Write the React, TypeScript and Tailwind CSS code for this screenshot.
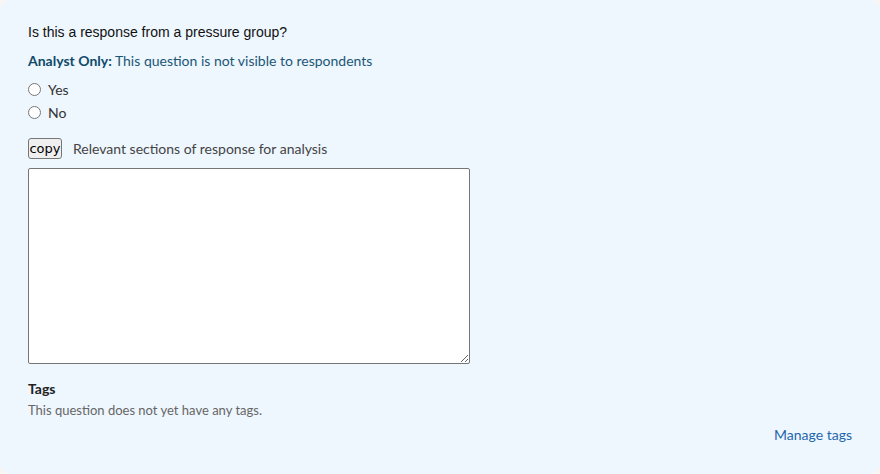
import React from "react";

export default function App() {
  return (
    <div className="w-[880px] h-[474px] bg-[#f7f6f0]">
      <div className="w-[880px] h-[474px] bg-[#eef6fe] rounded-[10px] pl-[28px] pr-[28px] pt-[22px] flex flex-col" style={{ fontFamily: "Lato, sans-serif" }}>
        <div className="text-[14px] text-[#111] leading-[20px]" style={{ fontFamily: "'Liberation Sans', Arial, sans-serif" }}>
          Is this a response from a pressure group?
        </div>
        <div className="mt-[9px] text-[14px] leading-[20px] text-[#1b5677]">
          <span className="font-bold text-[#0f4a6a]">Analyst Only:</span> This question is not visible to respondents
        </div>
        <div className="mt-[8px] flex flex-col gap-[3px]">
          <label className="flex items-center h-[20px] text-[14px] text-[#333]">
            <input type="radio" name="pg" className="m-0 w-[13px] h-[13px] mr-[7px]" />
            Yes
          </label>
          <label className="flex items-center h-[20px] text-[14px] text-[#333]">
            <input type="radio" name="pg" className="m-0 w-[13px] h-[13px] mr-[7px]" />
            No
          </label>
        </div>
        <div className="mt-[16px] flex items-center h-[21px]">
          <button className="h-[21px] w-[34px] p-0 border border-[#767676] rounded-[3px] bg-[#efefef] text-[13px] leading-[19px] text-black text-center" style={{ fontFamily: "'DejaVu Sans', sans-serif" }}>
            copy
          </button>
          <span className="ml-[11px] text-[14px] text-[#444]">Relevant sections of response for analysis</span>
        </div>
        <textarea className="mt-[9px] w-[442px] h-[196px] border border-[#767676] rounded-[2px] bg-white block" />
        <div className="mt-[15px] text-[14px] font-bold text-[#222] leading-[20px]">Tags</div>
        <div className="mt-[2px] text-[13px] text-[#666] leading-[18px]">This question does not yet have any tags.</div>
        <div className="flex justify-end mt-[7px]">
          <span className="text-[14px] leading-[18px] text-[#1f66aa]">Manage tags</span>
        </div>
      </div>
    </div>
  );
}
